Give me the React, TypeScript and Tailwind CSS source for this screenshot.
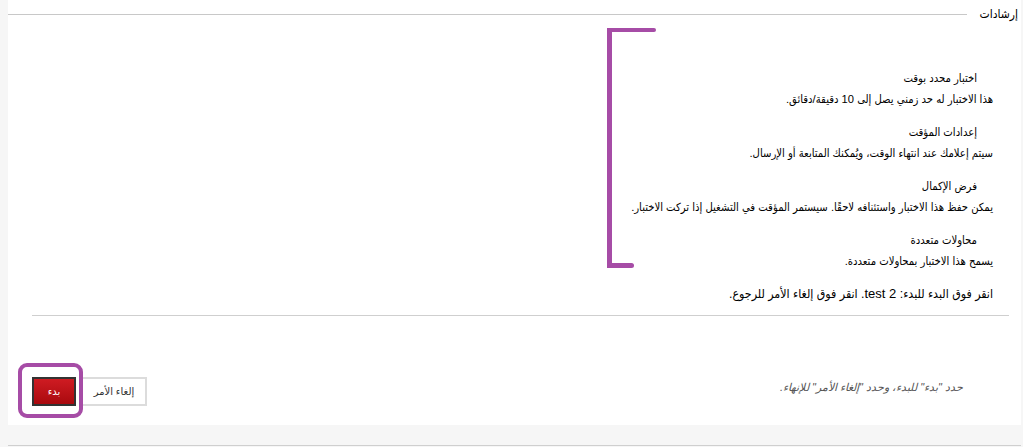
const groups = [
  {
    title: "اختبار محدد بوقت",
    body: "هذا الاختبار له حد زمني يصل إلى 10 دقيقة/دقائق.",
  },
  {
    title: "إعدادات المؤقت",
    body: "سيتم إعلامك عند انتهاء الوقت، ويُمكنك المتابعة أو الإرسال.",
  },
  {
    title: "فرض الإكمال",
    body: "يمكن حفظ هذا الاختبار واستئنافه لاحقًا. سيستمر المؤقت في التشغيل إذا تركت الاختبار.",
  },
  {
    title: "محاولات متعددة",
    body: "يسمح هذا الاختبار بمحاولات متعددة.",
  },
];

const App = () => {
  return (
    <div
      dir="rtl"
      className="w-full h-[447px] overflow-hidden bg-[#f6f6f6] pl-2 pr-[2px] text-[#111]"
      style={{ fontFamily: '"Liberation Sans", "DejaVu Sans", sans-serif' }}
    >
      <div className="relative h-[425px] bg-white">
        {/* legend row */}
        <div className="flex items-center h-[28px]">
          <span className="pr-[3px] text-[12px] leading-none font-['Liberation_Sans','DejaVu_Sans_Condensed',sans-serif] text-black">
            إرشادات
          </span>
          <div className="flex-1 h-px bg-[#c8c8c8] ms-3"></div>
        </div>

        {/* instructions */}
        <div className="mt-[40px] pr-[28px] text-[11.2px] leading-[21px] text-black font-['Liberation_Sans','DejaVu_Sans_Condensed',sans-serif]">
          {groups.map((g, i) => (
            <div key={i} className={i === 0 ? "" : "mt-3"}>
              <p className="pr-4">{g.title}</p>
              <p>{g.body}</p>
            </div>
          ))}
          <p className="mt-[11px] text-[12.3px]">
            انقر فوق البدء للبدء: <span className="text-[13px]">test 2</span>. انقر فوق إلغاء الأمر للرجوع.
          </p>
        </div>

        <div className="mt-[10px] ml-6 mr-3 h-px bg-[#cfcfcf]"></div>

        {/* actions */}
        <div className="mt-[61px] ml-6 mr-[58px] flex items-center justify-between">
          <p className="mb-2 text-[11px] italic text-[#555]">
            حدد "بدء" للبدء، وحدد "إلغاء الأمر" للإنهاء.
          </p>
          <div className="flex gap-[5px]">
            <button className="w-[66px] h-[29px] border-2 border-[#dcdcdc] bg-white text-[10px] text-[#333]">
              إلغاء الأمر
            </button>
            <div className="relative">
              <button className="w-[44px] h-[29px] border-2 border-[#333] bg-gradient-to-b from-[#cf1b22] to-[#a9090e] text-[10px] text-white">
                بدء
              </button>
              <span className="absolute -left-[14px] -right-[7px] -top-[14px] -bottom-[12px] border-4 border-[#a64ca6] rounded-[9px]"></span>
            </div>
          </div>
        </div>

        {/* annotation bracket */}
        <span className="absolute left-[599px] top-[28px] w-[5px] h-[240px] bg-[#a64ca6]"></span>
        <span className="absolute left-[599px] top-[28px] w-[49px] h-[4px] bg-[#a64ca6] rounded-r-sm"></span>
        <span className="absolute left-[599px] top-[263px] w-[27px] h-[5px] bg-[#a64ca6] rounded-r-sm"></span>
      </div>
      <div className="h-[20px]"></div>
      <div className="h-px bg-[#cfcfcf]"></div>
    </div>
  );
};

export default App;
